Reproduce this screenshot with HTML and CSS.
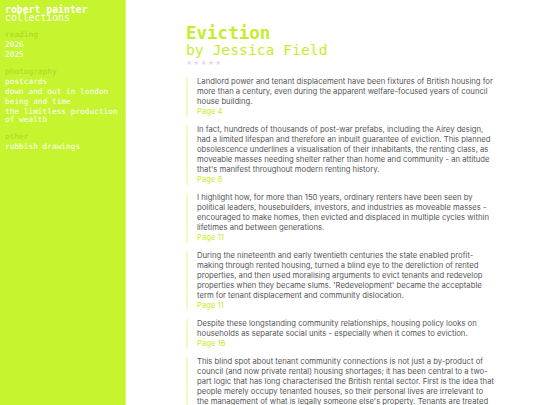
FILE: index.html
```html
<!DOCTYPE html>
<html>
<head>
<meta charset="utf-8">
<link rel="stylesheet" href="styles.css">
</head>
<body>
<div class="page">
  <aside class="sidebar">
    <div class="brand">
      <div class="brand-name">robert painter</div>
      <div class="brand-sub">collections</div>
    </div>
    <div class="group">
      <div class="group-title">reading</div>
      <div class="item">2026</div>
      <div class="item">2025</div>
    </div>
    <div class="group">
      <div class="group-title">photography</div>
      <div class="item">postcards</div>
      <div class="item">down and out in london</div>
      <div class="item">being and time</div>
      <div class="item">the limitless production of wealth</div>
    </div>
    <div class="group">
      <div class="group-title">other</div>
      <div class="item">rubbish drawings</div>
    </div>
  </aside>
  <main class="main">
    <div class="content">
      <h1 class="title">Eviction</h1>
      <div class="author">by Jessica Field</div>
      <div class="stars">★★★★★</div>
      <div class="quote">
        <p>Landlord power and tenant displacement have been fixtures of British housing for more than a century, even during the apparent welfare-focused years of council house building.</p>
        <div class="pg">Page 4</div>
      </div>
      <div class="quote">
        <p>In fact, hundreds of thousands of post-war prefabs, including the Airey design, had a limited lifespan and therefore an inbuilt guarantee of eviction. This planned obsolescence underlines a visualisation of their inhabitants, the renting class, as moveable masses needing shelter rather than home and community - an attitude that's manifest throughout modern renting history.</p>
        <div class="pg">Page 8</div>
      </div>
      <div class="quote">
        <p>I highlight how, for more than 150 years, ordinary renters have been seen by political leaders, housebuilders, investors, and industries as moveable masses - encouraged to make homes, then evicted and displaced in multiple cycles within lifetimes and between generations.</p>
        <div class="pg">Page 11</div>
      </div>
      <div class="quote">
        <p>During the nineteenth and early twentieth centuries the state enabled profit-making through rented housing, turned a blind eye to the dereliction of rented properties, and then used moralising arguments to evict tenants and redevelop properties when they became slums. 'Redevelopment' became the acceptable term for tenant displacement and community dislocation.</p>
        <div class="pg">Page 11</div>
      </div>
      <div class="quote">
        <p>Despite these longstanding community relationships, housing policy looks on households as separate social units - especially when it comes to eviction.</p>
        <div class="pg">Page 16</div>
      </div>
      <div class="quote">
        <p>This blind spot about tenant community connections is not just a by-product of council (and now private rental) housing shortages; it has been central to a two-part logic that has long characterised the British rental sector. First is the idea that people merely occupy tenanted houses, so their personal lives are irrelevant to the management of what is legally someone else's property. Tenants are treated as interchangeable occupants of units of housing stock.</p>
        <div class="pg">Page 17</div>
      </div>
    </div>
  </main>
</div>
</body>
</html>
```
FILE: styles.css
```css
html, body {
  margin: 0;
  padding: 0;
  height: 100%;
  overflow: hidden;
  background: #ffffff;
}
.page {
  display: flex;
  height: 405px;
  overflow: hidden;
}
.sidebar {
  width: 126px;
  flex: 0 0 126px;
  background: #c6f42e;
  box-shadow: inset -1px 0 0 #dcf87a;
  box-sizing: border-box;
  padding: 6px 5px 0 5px;
  font-family: "DejaVu Sans Mono", "Liberation Mono", monospace;
  color: #ffffff;
}
.brand-name {
  font-size: 9.8px;
  font-weight: bold;
  line-height: 7px;
}
.brand-sub {
  font-size: 9.8px;
  line-height: 9px;
}
.group {
  margin-top: 9px;
}
.group-title {
  font-size: 7.8px;
  line-height: 8px;
  color: #aad62a;
  margin-bottom: 2px;
}
.item {
  font-size: 7.8px;
  line-height: 8px;
  margin-bottom: 2px;
}
.main {
  flex: 1;
  display: flex;
  justify-content: center;
  overflow: hidden;
}
.content {
  flex: 0 0 310px;
  width: 310px;
  padding-top: 24px;
  margin-left: 16px;
}
.title {
  margin: 0;
  font-family: "DejaVu Sans Mono", "Liberation Mono", monospace;
  font-size: 17.5px;
  font-weight: bold;
  line-height: 18px;
  color: #c4ee2c;
}
.author {
  font-family: "DejaVu Sans Mono", "Liberation Mono", monospace;
  font-size: 14.7px;
  line-height: 15px;
  color: #c4ee2c;
}
.stars {
  font-size: 7px;
  line-height: 8px;
  letter-spacing: 1px;
  color: #e6d6ee;
  font-family: "DejaVu Sans", sans-serif;
  margin-top: 2px;
  margin-bottom: 10px;
}
.quote {
  border-left: 2px solid #effcc2;
  padding-left: 9px;
  margin-bottom: 8px;
  font-family: "Inter", "Noto Sans", sans-serif;
  font-size: 7.7px;
  line-height: 10px;
  color: #555555;
}
.quote p {
  margin: 0;
}
.pg {
  color: #c4ee2c;
}
```
